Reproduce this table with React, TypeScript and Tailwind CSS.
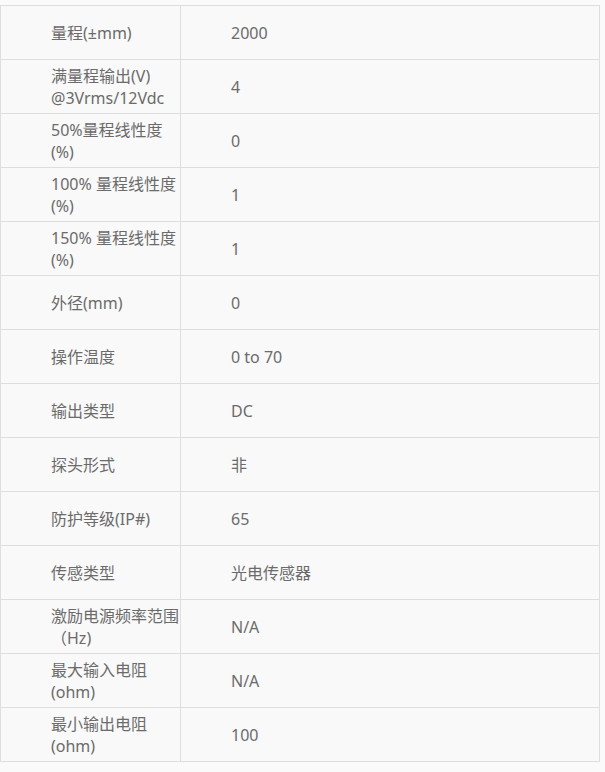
import React from 'react';

const rows: [React.ReactNode, string][] = [
  ['量程(±mm)', '2000'],
  [<>满量程输出(V)<br />@3Vrms/12Vdc</>, '4'],
  ['50%量程线性度(%)', '0'],
  ['100% 量程线性度(%)', '1'],
  ['150% 量程线性度(%)', '1'],
  ['外径(mm)', '0'],
  ['操作温度', '0 to 70'],
  ['输出类型', 'DC'],
  ['探头形式', '非'],
  ['防护等级(IP#)', '65'],
  ['传感类型', '光电传感器'],
  ['激励电源频率范围（Hz)', 'N/A'],
  ['最大输入电阻(ohm)', 'N/A'],
  ['最小输出电阻(ohm)', '100'],
];

const App = () => {
  return (
    <div
      className="min-h-screen bg-[#fafafa] pt-[5px] text-[16px] leading-[22px] text-[#6b6b6b]"
      style={{ fontFamily: '"Noto Sans", "Noto Sans CJK SC", sans-serif' }}
    >
      <table className="w-[600px] border-collapse bg-[#f9f9f9]">
        <tbody>
          {rows.map(([label, value], i) => (
            <tr key={i} className="h-[54px] border border-[#dedede]">
              <td className="w-[180px] border-r border-[#dedede] pl-[50px] pr-0 align-middle">
                {label}
              </td>
              <td className="pl-[50px] align-middle">{value}</td>
            </tr>
          ))}
        </tbody>
      </table>
    </div>
  );
};

export default App;
